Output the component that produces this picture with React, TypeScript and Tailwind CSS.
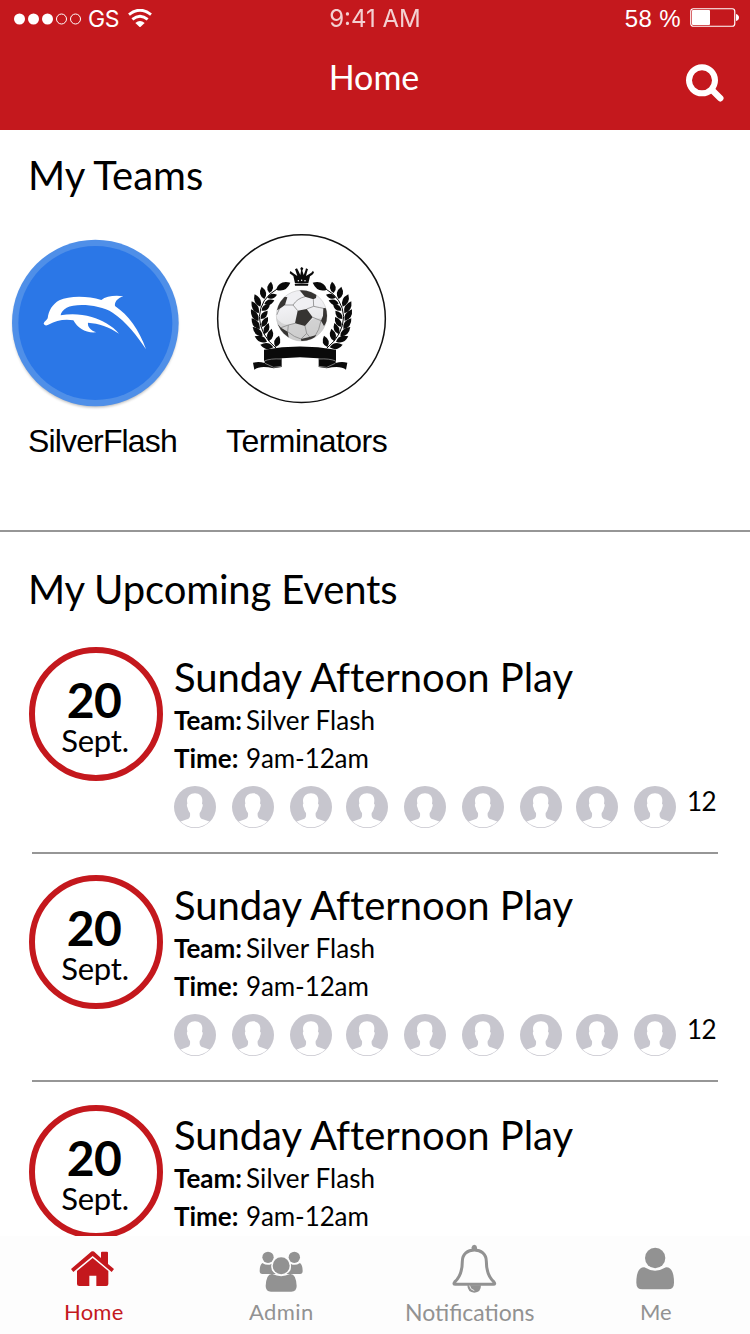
import React from "react";

// base x, base y, tip x, tip y, half-width
const LEAVES: [number, number, number, number, number][] = [
  [213, 194, 256, 173, 11],
  [193, 204, 198, 170, 9],
  [178, 222, 170, 185, 9],
  [166, 245, 149, 208, 9],
  [161, 265, 140, 229, 9],
  [160, 288, 138, 253, 9],
  [164, 312, 140, 280, 9],
  [173, 334, 143, 306, 9],
  [186, 350, 149, 334, 9],
  [205, 367, 166, 359, 9],
  [187, 218, 216, 209, 7],
  [178, 237, 208, 226, 8],
  [170, 257, 195, 237, 8],
  [167, 282, 188, 257, 8],
  [170, 306, 189, 276, 8],
  [178, 328, 191, 294, 8],
  [191, 349, 200, 311, 9],
  [212, 366, 222, 332, 9],
];

function leafPath([bx, by, tx, ty, w]: [number, number, number, number, number]) {
  const dx = tx - bx;
  const dy = ty - by;
  const len = Math.hypot(dx, dy);
  const nx = (-dy / len) * w * 2;
  const ny = (dx / len) * w * 2;
  const mx = bx + dx * 0.45;
  const my = by + dy * 0.45;
  return `M${bx} ${by}Q${mx + nx} ${my + ny} ${tx} ${ty}Q${mx - nx} ${my - ny} ${bx} ${by}Z`;
}

function Wreath() {
  return (
    <g>
      {LEAVES.map((leaf, i) => (
        <path key={i} d={leafPath(leaf)} />
      ))}
      <path d="M215 193Q166 221 163 275Q165 330 214 370" fill="none" stroke="#0a0a0a" strokeWidth="3" />
    </g>
  );
}

function DolphinLogo() {
  return (
    <svg className="h-[190px] w-[200px] shrink-0" viewBox="0 0 600 570">
      <defs>
        <filter id="soft" x="-10%" y="-10%" width="120%" height="120%">
          <feGaussianBlur stdDeviation="5" />
        </filter>
      </defs>
      <circle cx="286" cy="300" r="247" fill="#000" opacity="0.3" filter="url(#soft)" />
      <circle cx="286" cy="294" r="250" fill="#4f8fe8" />
      <circle cx="286" cy="294" r="231" fill="#2b77e7" />
      <path
        fill="#fff"
        d="M131 295C134 289 140 285 143 280C146 257 157 238 178 226C207 212 262 212 304 225C318 214 344 210 370 214C352 220 343 231 345 243C385 270 418 315 438 373C411 331 380 292 338 263C300 239 228 234 200 248C189 255 182 264 182 271C211 266 245 267 275 276C306 285 337 302 357 326C328 306 296 295 264 293C262 304 270 315 289 322C257 325 233 310 220 286C194 281 166 287 148 298C140 303 132 302 131 295Z"
      />
    </svg>
  );
}

function SoccerLogo() {
  return (
    <svg className="h-[190px] w-[190px] shrink-0" viewBox="0 0 570 570" fill="#0a0a0a">
      <defs>
        <clipPath id="ball">
          <circle cx="290" cy="272" r="76" />
        </clipPath>
        <linearGradient id="shade" x1="0" y1="0" x2="0.2" y2="1">
          <stop offset="0.4" stopColor="#f0f0f3" />
          <stop offset="1" stopColor="#dcdcdc" />
        </linearGradient>
      </defs>
      <circle cx="289.500" cy="281" r="251.500" fill="#fff" stroke="#111" strokeWidth="4.500" />
      <Wreath />
      <g transform="translate(579 0) scale(-1 1)">
        <Wreath />
      </g>
      <path d="M270 175L265 153L254 145L256 138L263 143L277 153L272 138L270 133L276 130L280 137L286 150L288 137L286 130L290 126L295 130L292 137L296 150L301 137L303 130L309 133L307 138L303 153L319 143L324 137L327 143L322 149L315 154L310 175Z" />
      <path d="M269 177Q290 174 310 177L309 182H270Z" />
      <g fill="#fff">
        <circle cx="280" cy="167" r="2.200" />
        <circle cx="290" cy="166" r="2.200" />
        <circle cx="300" cy="167" r="2.200" />
      </g>
      <circle cx="290" cy="272" r="76" fill="url(#shade)" stroke="#bbb" strokeWidth="1.500" />
      <g clipPath="url(#ball)">
        <path d="M212 275Q225 297 250 300L270 295L300 303L323 282Q343 282 366 275V350H212Z" fill="#bdbdbd" opacity="0.5" />
        <g fill="none" stroke="#8a8a8a" strokeWidth="2.500">
          <path d="M278 257L264 240L240 240M264 240Q277 220 300 215M305 252L326 244L325 223M326 244Q345 248 355 250M323 277L348 287M300 303L305 325L288 342M305 325L315 337M348 287L341 313L330 333M270 295L250 300L228 308M250 300L248 320M215 270L223 252M248 320Q268 337 288 342" />
        </g>
        <g fill="#363432">
          <path d="M278 257L305 252L323 277L300 303L270 295Z" />
          <path d="M210 250L214 230L228 213L247 217L240 240L223 252L212 258Z" />
          <path d="M283 195L300 192L335 206L333 219L325 223L300 215Z" />
          <path d="M355 249L368 250L370 285L357 303L348 287L354 272Z" />
          <path d="M215 294L228 308L248 320L252 343L222 333Z" />
          <path d="M288 342L313 336L334 330L320 350L290 353Z" />
        </g>
      </g>
      <path d="M144 413Q162 409 179 414L178 396L230 400V426L206 430Q165 421 148 434ZM427 413Q409 409 392 414L393 396L341 400V426L365 430Q406 421 423 434Z" />
      <path d="M177 374Q285 355 393 374V408Q285 386 177 408Z" />
      <path d="M178 408Q196 400 229 402M392 408Q374 400 341 402M180 415L206 427L229 424M391 415L365 427L341 424" fill="none" stroke="#aaa" strokeWidth="2" />
    </svg>
  );
}

function Avatar({ id }: { id: string }) {
  return (
    <svg className="h-[42px] w-[42px]" viewBox="0 0 126 126">
      <clipPath id={id}>
        <circle cx="63" cy="63" r="61" />
      </clipPath>
      <circle cx="63" cy="63" r="63" fill="#c7c6ce" />
      <path
        clipPath={`url(#${id})`}
        fill="#fff"
        d="M63 22C77 22 86 31 85 45L84 53C87 53 87 60 84 66C83 73 80 77 77 81C76 91 78 97 87 100L108 107L126 126H0L18 107L39 100C48 97 49 91 48 81C45 77 42 72 41 66C38 60 38 54 40 53L39 45C39 31 49 22 63 22Z"
      />
    </svg>
  );
}

const SLOTS = ["w-[58px]", "w-[58px]", "w-[56px]", "w-[58px]", "w-[58px]", "w-[58px]", "w-[56px]", "w-[58px]", "w-[53px]"];

function Attendees({ id, count }: { id: string; count: number }) {
  return (
    <div className="mt-[8px] flex h-[42px]">
      {SLOTS.map((slot, i) => (
        <div key={i} className={`${slot} shrink-0`}>
          <Avatar id={`${id}-${i}`} />
        </div>
      ))}
      <span className="text-[26px] leading-[30px] tracking-[-0.6px]">{count}</span>
    </div>
  );
}

function EventRow({ id, count }: { id: string; count?: number }) {
  return (
    <article className={count ? "mb-[21px]" : "mt-[2px]"}>
      <div className="flex pl-[29px]">
        <div className="flex h-[134px] w-[134px] shrink-0 flex-col items-center rounded-full border-[6px] border-[#c4181d] pt-[24px]">
          <span className="mr-[4px] text-[48px] leading-[46px] font-bold tracking-[-0.5px]">20</span>
          <span className="mr-[2px] text-[31px] leading-[34px] tracking-[-0.2px]">Sept.</span>
        </div>
        <div className="ml-[11px] flex flex-col pt-[7px]">
          <h3 className="text-[40px] leading-[47px] tracking-[-0.05px] whitespace-nowrap [font-variant-ligatures:none]">Sunday Afternoon Play</h3>
          <p className="flex text-[26px] leading-[38px]">
            <b className="w-[72px] font-bold">Team:</b>
            <span className="tracking-[0.1px]">Silver Flash</span>
          </p>
          <p className="flex text-[26px] leading-[38px]">
            <b className="w-[72px] font-bold">Time:</b>
            <span className="tracking-[-0.1px]">9am-12am</span>
          </p>
          {count && <div className="pt-px"><Attendees id={id} count={count} /></div>}
        </div>
      </div>
      {count && <div className="mt-[24px] mr-8 ml-8 h-[2px] bg-[#969696]" />}
    </article>
  );
}

function HomeIcon() {
  return (
    <svg className="h-[50px] w-[60px]" viewBox="191 39 180 150" fill="#c4181d">
      <path d="M277 64Q281 64 285 68L302 84V68Q302 65 305 65H320Q323 65 323 68V102L341 117L334 126L277 78L219 126L212 117L269 68Q273 64 277 64Z" />
      <path d="M277 84L324 123V162Q324 168 318 168H288V137H267V168H237Q230 168 230 162V123Z" />
    </svg>
  );
}

function AdminIcon() {
  return (
    <svg className="h-[50px] w-[60px]" viewBox="754 39 180 150" fill="#929292">
      <circle cx="805" cy="82" r="17" />
      <circle cx="884" cy="82" r="17" />
      <path d="M788 99Q804 109 816 101Q811 124 829 132H788Q780 132 780 123Q780 105 788 99ZM901 99Q885 109 873 101Q878 124 860 132H901Q909 132 909 123Q909 105 901 99Z" />
      <circle cx="844.500" cy="107" r="29" fill="#fdfdfd" />
      <circle cx="844.500" cy="107" r="25.500" />
      <path d="M818 132Q844 145 871 132Q889 130 891 168Q891 185 875 185H814Q798 185 798 168Q800 130 818 132Z" />
    </svg>
  );
}

function BellIcon() {
  return (
    <svg className="h-[50px] w-[60px]" viewBox="191 39 180 150" fill="#929292">
      <path d="M289 60V52Q290 44 297 44Q304 44 305 52V60Z" />
      <path
        d="M297 60C277 60 261 72 261 94C261 119 254 142 238 156Q233 163 240 163H354Q361 163 356 156C340 142 333 119 333 94C333 72 317 60 297 60Z"
        fill="none"
        stroke="#929292"
        strokeWidth="9"
      />
      <path d="M276 166H317Q317 188 297 188Q277 188 276 166Z" />
      <path d="M283 167Q284 179 297 182" fill="none" stroke="#fff" strokeWidth="2.500" />
    </svg>
  );
}

function MeIcon() {
  return (
    <svg className="h-[50px] w-[60px]" viewBox="752 39 180 150" fill="#929292">
      <circle cx="839.500" cy="84" r="30.500" />
      <path d="M807 112Q839 132 872 112Q896 111 896 158Q896 178 878 178H801Q783 178 783 158Q783 111 807 112Z" />
    </svg>
  );
}

function Tab({ icon, label, active, className }: { icon: React.ReactNode; label: string; active?: boolean; className: string }) {
  return (
    <div className={`flex flex-col items-center ${active ? "text-[#c4181d]" : "text-[#929292]"}`}>
      {icon}
      <span className={`mt-[6px] leading-[26px] ${className}`}>{label}</span>
    </div>
  );
}

export default function App() {
  return (
    <div className="flex h-[1334px] w-[750px] flex-col overflow-hidden bg-white font-['Lato',sans-serif] text-black">
      <header className="flex h-[130px] shrink-0 flex-col bg-[#c4181d] text-white">
        <div className="grid h-[36px] grid-cols-3 items-center font-['Inter',sans-serif] text-[24px] leading-[36px]">
          <div className="flex items-center pl-[14px]">
            <svg className="h-[12px] w-[68px]" viewBox="0 0 68 12">
              <g fill="#fff">
                <circle cx="5.500" cy="6" r="5.500" />
                <circle cx="19.500" cy="6" r="5.500" />
                <circle cx="33.500" cy="6" r="5.500" />
              </g>
              <g fill="none" stroke="#fff">
                <circle cx="47.500" cy="6" r="5" />
                <circle cx="61.500" cy="6" r="5" />
              </g>
            </svg>
            <span className="ml-[6px] w-[40px] text-[23px] tracking-[-0.3px]">GS</span>
            <svg className="mb-[2px] h-[18px] w-[24px]" viewBox="384 23 72 54">
              <g fill="none" stroke="#fff">
                <path d="M387 40Q420 13 453 40" strokeWidth="8.500" />
                <path d="M397 54Q420 35 443 54" strokeWidth="8.500" />
              </g>
              <path d="M406 65Q420 53 434 65L420 78Z" fill="#fff" />
            </svg>
          </div>
          <span className="pt-px text-center opacity-80">9:41 AM</span>
          <div className="flex items-center justify-end pr-[10px]">
            <span className="mr-[9px] font-['Liberation_Sans',sans-serif] text-[24px] tracking-[0.4px]">58 %</span>
            <svg className="mb-[3px] h-[19px] w-[50px]" viewBox="0 0 50 19">
              <rect x="0.750" y="0.750" width="44" height="17.500" rx="2.500" fill="none" stroke="#fff" strokeWidth="1.200" />
              <rect x="2" y="2" width="18" height="15" rx="1" fill="#fff" />
              <path d="M46 6Q49 7 49 9.500Q49 12 46 13Z" fill="#fff" />
            </svg>
          </div>
        </div>
        <div className="grid grow grid-cols-3 items-start">
          <h1 className="col-start-2 mt-[20px] mr-[2px] text-center text-[34px] leading-[42px]">Home</h1>
          <svg className="mt-[28px] mr-[26px] h-[38px] w-[38px] justify-self-end" viewBox="257 192 114 114" fill="none" stroke="#fff" strokeLinecap="round">
            <circle cx="305" cy="241" r="39" strokeWidth="18" />
            <path d="M335 270L360 295" strokeWidth="19" />
          </svg>
        </div>
      </header>

      <section className="h-[402px] shrink-0 border-b-2 border-[#969696] pt-[21px]">
        <h2 className="ml-[28px] text-[40px] leading-[49px]">My Teams</h2>
        <div className="mt-[25px] flex gap-[5px]">
          <DolphinLogo />
          <SoccerLogo />
        </div>
        <div className="mt-[7px] flex font-['Liberation_Sans',sans-serif] text-[32px] leading-[38px]">
          <span className="ml-[28px] w-[198px] tracking-[-0.85px]">SilverFlash</span>
          <span className="tracking-[-0.55px]">Terminators</span>
        </div>
      </section>

      <main className="flex h-[704px] shrink-0 flex-col overflow-hidden pt-[33px]">
        <h2 className="mb-[33px] ml-[28px] text-[40px] leading-[49px] tracking-[-0.15px]">My Upcoming Events</h2>
        <EventRow id="first" count={12} />
        <EventRow id="second" count={12} />
        <EventRow id="third" />
      </main>

      <nav className="grid h-[98px] shrink-0 grid-cols-4 bg-[#fdfdfd] pt-[7px]">
        <Tab icon={<HomeIcon />} label="Home" active className="text-[22px] tracking-[0.2px]" />
        <Tab icon={<AdminIcon />} label="Admin" className="text-[22px] tracking-[0.4px]" />
        <Tab icon={<BellIcon />} label="Notifications" className="ml-[2px] text-[23px]" />
        <Tab icon={<MeIcon />} label="Me" className="mr-[1px] text-[22px]" />
      </nav>
    </div>
  );
}
